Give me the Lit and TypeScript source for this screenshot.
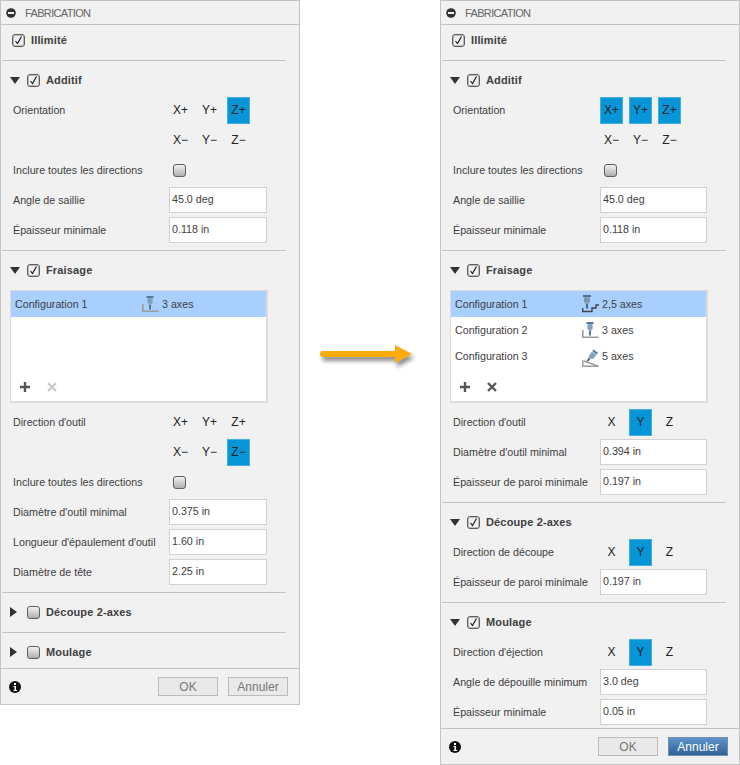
import {LitElement, css, html, svg} from 'lit';
import {customElement, property} from 'lit/decorators.js';

type Row =
  | {kind: 'dirs'; label: string; items: string[]; active?: string}
  | {kind: 'check'; label: string}
  | {kind: 'input'; label: string; value: string}
  | {kind: 'list'; rows: {name: string; icon: string; axes: string}[]; canDelete: boolean};

interface Section {
  title: string;
  checked: boolean;
  open: boolean;
  rows: Row[];
}

const icons: Record<string, unknown> = {
  '25': svg`
    <rect x="1" y="0" width="8" height="2" fill="#4f718f"/>
    <path d="M2 2h6v5l-1.500 2h-3L2 7z" fill="#86a3bf"/>
    <path d="M2 4h6M2 6h6" stroke="#5f7f9f" stroke-width="0.700"/>
    <rect x="4" y="9" width="2" height="4.500" fill="#44698c"/>
    <path d="M0.700 13v3.500H10V13h4v-3h3" fill="none" stroke="#444" stroke-width="1.400"/>`,
  '3': svg`
    <rect x="4.500" y="1" width="7" height="2" fill="#55799b"/>
    <path d="M5.500 3h5v5L9 10H7L5.500 8z" fill="#8fabc6"/>
    <path d="M5.500 5h5M5.500 7h5" stroke="#6a8cab" stroke-width="0.700"/>
    <rect x="7" y="10" width="2" height="4.500" fill="#4f7496"/>
    <path d="M0.800 9v7.200H16.500" fill="none" stroke="#9c9c9c" stroke-width="1.600"/>`,
  '5': svg`
    <path d="M11.500 2.500l4.500 3.500-1.200 1.500-4.500-3.500z" fill="#4f7496"/>
    <path d="M10 4.500l4.500 3.500-3.500 4-2.500-.3-2-2.200z" fill="#86a3bf"/>
    <path d="M6.800 10.500l1.700 1.500-3 3-1-1z" fill="#44698c"/>
    <path d="M0.800 13v6.200H16.500L2 14" fill="none" stroke="#9c9c9c" stroke-width="1.400"/>`,
};

const plus = html`<svg width="12" height="12" viewBox="0 0 12 12"><path d="M6 1v10M1 6h10" stroke="currentColor" stroke-width="2.400"/></svg>`;
const cross = html`<svg width="10" height="10" viewBox="0 0 10 10"><path d="M1 1l8 8M9 1l-8 8" stroke="currentColor" stroke-width="2.400"/></svg>`;

@customElement('fab-check')
export class FabCheck extends LitElement {
  @property({type: Boolean}) checked = false;

  static styles = css`
    :host {
      display: block;
      width: 13px;
      height: 13px;
    }
    .box {
      display: block;
      box-sizing: border-box;
      width: 13px;
      height: 13px;
      border: 1px solid #5e5e5e;
      border-radius: 3px;
      background: linear-gradient(#f2f2f2, #aeaeae);
    }
    .on {
      background: #f0f0f0;
      box-shadow: inset 0 0 0 1px #bcbcbc;
    }
    svg {
      display: block;
    }
  `;

  render() {
    return html`<span class="box ${this.checked ? 'on' : ''}">
      ${this.checked ? html`<svg width="11" height="11" viewBox="0 0 11 11"><path d="M2.500 6l2 2.500L8.500 1.500" fill="none" stroke="#111" stroke-width="1.100"/></svg>` : ''}
    </span>`;
  }
}

@customElement('fab-panel')
export class FabPanel extends LitElement {
  @property({type: Array}) sections: Section[] = [];
  @property({type: Boolean}) wide = false;
  @property({type: Boolean}) cancelOn = false;

  static styles = css`
    :host {
      display: block;
      width: 300px;
      font-family: "Liberation Sans", Arial, sans-serif;
      font-size: 10.700px;
      color: #404040;
    }
    .panel {
      box-sizing: border-box;
      border: 1px solid #c4c4c4;
      background: #f1f1f1;
      --col: 156px;
    }
    .wide {
      --col: 147px;
    }
    .title {
      display: flex;
      align-items: center;
      height: 23px;
      padding-left: 5px;
      gap: 9px;
      border-bottom: 1px solid #c4c4c4;
      font-size: 11px;
      letter-spacing: -0.650px;
      color: #666;
    }
    .unlimited {
      display: flex;
      align-items: center;
      gap: 6px;
      height: 30px;
      padding-left: 11px;
      margin-bottom: 5px;
      font-size: 11px;
      font-weight: bold;
      letter-spacing: 0.150px;
    }
    .section {
      border-top: 1px solid #c4c4c4;
      margin: 0 13px 0 1px;
      padding-bottom: 5px;
    }
    .last {
      padding-bottom: 0;
    }
    .head {
      display: flex;
      align-items: center;
      height: 30px;
      margin-top: 4px;
      font-size: 11px;
      font-weight: bold;
      letter-spacing: 0.150px;
    }
    .arrow {
      width: 17px;
      margin-left: 8px;
      display: flex;
    }
    .head fab-check {
      margin-right: 6px;
    }
    .row {
      display: grid;
      grid-template-columns: var(--col) 1fr;
      align-items: center;
      height: 30px;
      padding: 0 19px 0 11px;
    }
    .dirs {
      display: flex;
      gap: 6px;
    }
    .dir {
      box-sizing: border-box;
      width: 23px;
      height: 27px;
      display: flex;
      align-items: center;
      justify-content: center;
      font-size: 12px;
      color: #222;
    }
    .active {
      background: #0696d7;
      border: 1px solid #45aee0;
    }
    .row fab-check {
      margin-left: 4px;
    }
    input {
      box-sizing: border-box;
      width: 100%;
      height: 26px;
      padding: 0 2px 2px;
      border: 1px solid #d2d2d2;
      outline: 0;
      background: #fff;
      font: inherit;
      color: #404040;
    }
    .list {
      box-sizing: border-box;
      display: flex;
      flex-direction: column;
      width: 258px;
      height: 113px;
      margin: 5px 0 4px 8px;
      border: 1px solid #dcdcdc;
      border-width: 1px 2px 2px 1px;
      background: #fff;
    }
    .item {
      display: flex;
      align-items: center;
      height: 26px;
      padding-left: 4px;
    }
    .selected {
      background: #a9cfff;
    }
    .name {
      width: 127px;
    }
    .item svg {
      margin-right: 3px;
      overflow: visible;
    }
    .tools {
      display: flex;
      align-items: center;
      gap: 15px;
      height: 30px;
      margin-top: auto;
      padding: 2px 0 0 8px;
      box-sizing: border-box;
      color: #555;
    }
    .off {
      color: #ccc;
    }
    .tools span {
      display: flex;
      width: 12px;
      justify-content: center;
    }
    .footer {
      display: flex;
      align-items: center;
      height: 35px;
      margin-top: 1px;
      padding: 0 11px 0 8px;
      border-top: 1px solid #c4c4c4;
    }
    .footer svg {
      margin-right: auto;
    }
    .btn {
      box-sizing: border-box;
      width: 60px;
      height: 19px;
      margin-left: 10px;
      display: flex;
      align-items: center;
      justify-content: center;
      border: 1px solid #bcbcbc;
      background: #e9e9e9;
      color: #777;
      font-size: 12px;
    }
    .primary {
      border-color: #6e8fb0;
      background: linear-gradient(#5e94cb, #2f6295);
      color: #fff;
    }
  `;

  renderRow(r: Row) {
    switch (r.kind) {
      case 'dirs':
        return html`<div class="row"><span>${r.label}</span><div class="dirs">
          ${r.items.map((d) => html`<span class="dir ${r.active?.includes(d) ? 'active' : ''}">${d}</span>`)}
        </div></div>`;
      case 'check':
        return html`<div class="row"><span>${r.label}</span><fab-check></fab-check></div>`;
      case 'input':
        return html`<div class="row"><span>${r.label}</span><input value=${r.value} /></div>`;
      case 'list':
        return html`<div class="list">
          ${r.rows.map((it, i) => html`<div class="item ${i === 0 ? 'selected' : ''}">
            <span class="name">${it.name}</span>
            <svg width="17" height="18" viewBox="0 0 17 18">${icons[it.icon]}</svg>
            <span>${it.axes}</span>
          </div>`)}
          <div class="tools"><span>${plus}</span><span class=${r.canDelete ? '' : 'off'}>${cross}</span></div>
        </div>`;
    }
  }

  render() {
    return html`<div class="panel ${this.wide ? 'wide' : ''}">
      <div class="title">
        <svg width="10" height="10" viewBox="0 0 10 10"><circle cx="5" cy="5" r="4.800" fill="#333"/><rect x="2" y="4" width="6" height="2" fill="#f1f1f1"/></svg>
        FABRICATION
      </div>
      <div class="unlimited"><fab-check checked></fab-check>Illimité</div>
      ${this.sections.map((s, i) => html`<div class="section ${i === this.sections.length - 1 ? 'last' : ''}">
        <div class="head">
          <span class="arrow">
            ${s.open
              ? html`<svg width="10" height="7" viewBox="0 0 10 7"><path d="M0 0h10L5 7z" fill="#333"/></svg>`
              : html`<svg width="7" height="10" viewBox="0 0 7 10"><path d="M0 0v10l7-5z" fill="#333"/></svg>`}
          </span>
          <fab-check ?checked=${s.checked}></fab-check>${s.title}
        </div>
        ${s.open ? s.rows.map((r) => this.renderRow(r)) : ''}
      </div>`)}
      <div class="footer">
        <svg width="12" height="12" viewBox="0 0 12 12"><circle cx="6" cy="6" r="6" fill="#111"/><rect x="5" y="2" width="2" height="2" fill="#fff"/><path d="M4.500 5H7v4h1v1H4.500V9h1V6h-1z" fill="#fff"/></svg>
        <span class="btn">OK</span>
        <span class="btn ${this.cancelOn ? 'primary' : ''}">Annuler</span>
      </div>
    </div>`;
  }
}

const before: Section[] = [
  {
    title: 'Additif', checked: true, open: true,
    rows: [
      {kind: 'dirs', label: 'Orientation', items: ['X+', 'Y+', 'Z+'], active: 'Z+'},
      {kind: 'dirs', label: '', items: ['X−', 'Y−', 'Z−']},
      {kind: 'check', label: 'Inclure toutes les directions'},
      {kind: 'input', label: 'Angle de saillie', value: '45.0 deg'},
      {kind: 'input', label: 'Épaisseur minimale', value: '0.118 in'},
    ],
  },
  {
    title: 'Fraisage', checked: true, open: true,
    rows: [
      {kind: 'list', canDelete: false, rows: [{name: 'Configuration 1', icon: '3', axes: '3 axes'}]},
      {kind: 'dirs', label: "Direction d'outil", items: ['X+', 'Y+', 'Z+']},
      {kind: 'dirs', label: '', items: ['X−', 'Y−', 'Z−'], active: 'Z−'},
      {kind: 'check', label: 'Inclure toutes les directions'},
      {kind: 'input', label: "Diamètre d'outil minimal", value: '0.375 in'},
      {kind: 'input', label: "Longueur d'épaulement d'outil", value: '1.60 in'},
      {kind: 'input', label: 'Diamètre de tête', value: '2.25 in'},
    ],
  },
  {title: 'Découpe 2-axes', checked: false, open: false, rows: []},
  {title: 'Moulage', checked: false, open: false, rows: []},
];

const after: Section[] = [
  {
    title: 'Additif', checked: true, open: true,
    rows: [
      {kind: 'dirs', label: 'Orientation', items: ['X+', 'Y+', 'Z+'], active: 'X+ Y+ Z+'},
      {kind: 'dirs', label: '', items: ['X−', 'Y−', 'Z−']},
      {kind: 'check', label: 'Inclure toutes les directions'},
      {kind: 'input', label: 'Angle de saillie', value: '45.0 deg'},
      {kind: 'input', label: 'Épaisseur minimale', value: '0.118 in'},
    ],
  },
  {
    title: 'Fraisage', checked: true, open: true,
    rows: [
      {
        kind: 'list', canDelete: true,
        rows: [
          {name: 'Configuration 1', icon: '25', axes: '2,5 axes'},
          {name: 'Configuration 2', icon: '3', axes: '3 axes'},
          {name: 'Configuration 3', icon: '5', axes: '5 axes'},
        ],
      },
      {kind: 'dirs', label: "Direction d'outil", items: ['X', 'Y', 'Z'], active: 'Y'},
      {kind: 'input', label: "Diamètre d'outil minimal", value: '0.394 in'},
      {kind: 'input', label: 'Épaisseur de paroi minimale', value: '0.197 in'},
    ],
  },
  {
    title: 'Découpe 2-axes', checked: true, open: true,
    rows: [
      {kind: 'dirs', label: 'Direction de découpe', items: ['X', 'Y', 'Z'], active: 'Y'},
      {kind: 'input', label: 'Épaisseur de paroi minimale', value: '0.197 in'},
    ],
  },
  {
    title: 'Moulage', checked: true, open: true,
    rows: [
      {kind: 'dirs', label: "Direction d'éjection", items: ['X', 'Y', 'Z'], active: 'Y'},
      {kind: 'input', label: 'Angle de dépouille minimum', value: '3.0 deg'},
      {kind: 'input', label: 'Épaisseur minimale', value: '0.05 in'},
    ],
  },
];

@customElement('app-root')
export class AppRoot extends LitElement {
  static styles = css`
    :host {
      display: block;
      width: 740px;
      height: 765px;
      background: #fff;
    }
    .page {
      display: flex;
      align-items: flex-start;
    }
    .arrow {
      width: 140px;
      padding-top: 340px;
      display: flex;
      justify-content: center;
    }
  `;

  render() {
    return html`<div class="page">
      <fab-panel .sections=${before}></fab-panel>
      <div class="arrow">
        <svg width="104" height="34" viewBox="0 0 104 34">
          <defs><filter id="s" x="-10%" y="-50%" width="120%" height="200%"><feDropShadow dx="2" dy="4" stdDeviation="2" flood-color="#000" flood-opacity="0.45"/></filter></defs>
          <path d="M5 11H77V5L94 14 77 23V17H5a3 3 0 0 1 0-6z" fill="#fcab0a" filter="url(#s)"/>
        </svg>
      </div>
      <fab-panel .sections=${after} wide cancelOn></fab-panel>
    </div>`;
  }
}
